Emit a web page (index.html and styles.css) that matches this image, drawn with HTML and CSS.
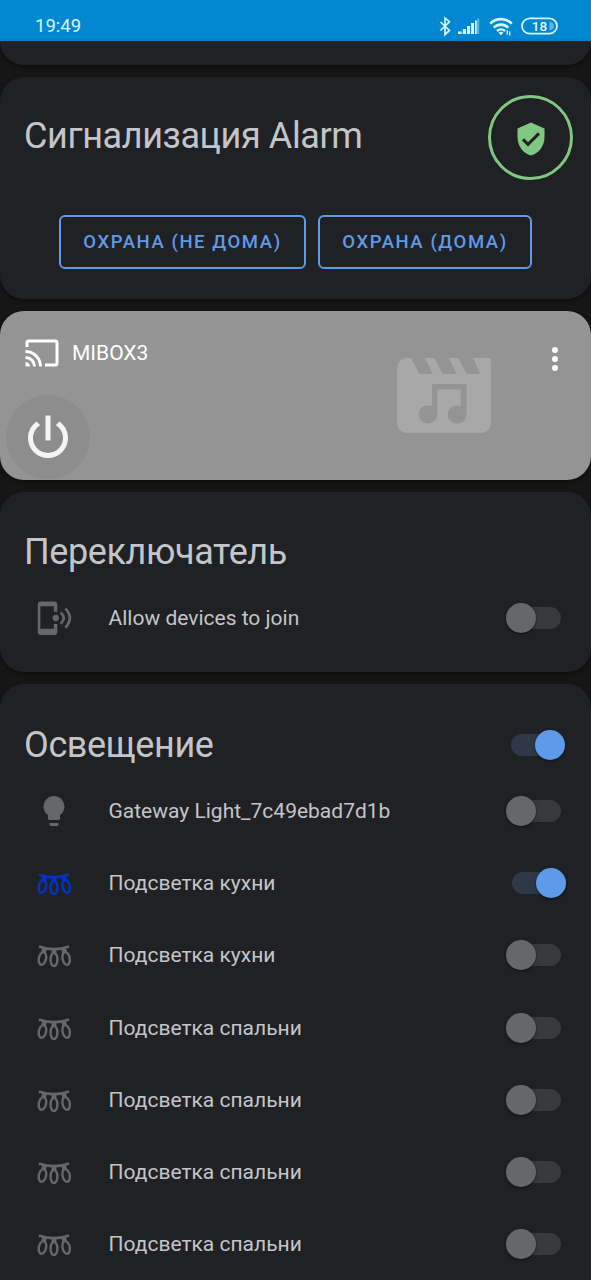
FILE: index.html
```html
<!DOCTYPE html>
<html lang="ru">
<head>
<meta charset="utf-8">
<title>Home</title>
<link rel="stylesheet" href="styles.css">
</head>
<body>
<svg class="defs" width="0" height="0">
  <symbol id="garland" viewBox="0 0 24 24">
    <g fill="none" stroke="currentColor">
      <path stroke-width="1.8" d="M2 6.300Q12 9.800 22 6.300"/>
      <path stroke-width="3.200" d="M5.600 7.600L5 10.800M12 8.400V11.200M18.400 7.600L19.200 10.800"/>
      <ellipse stroke-width="1.600" cx="4.300" cy="14.300" rx="2.400" ry="4.300" transform="rotate(12 4.300 14.300)"/>
      <ellipse stroke-width="1.600" cx="12" cy="15" rx="2.300" ry="4.300"/>
      <ellipse stroke-width="1.600" cx="20.100" cy="14.300" rx="2.400" ry="4.300" transform="rotate(-12 20.100 14.300)"/>
    </g>
  </symbol>
</svg>
<header class="status">
  <span class="clock">19:49</span>
  <svg class="status-icons" width="120" height="22" viewBox="0 0 120 22">
    <g fill="none" stroke="#d9f6ff" stroke-width="1.7">
      <path d="M1.500 6L10.500 14.500L6 18.500V2L10.500 5.700L1.500 14.500"/>
      <path d="M51.200 7.700A15 15 0 0 1 72.800 7.700" stroke-width="2.600"/>
      <path d="M54.700 11.600A10.400 10.400 0 0 1 69.300 11.600" stroke-width="2.600"/>
      <path d="M58 15A6 6 0 0 1 66 15" stroke-width="2.400"/>
      <rect x="83" y="2.300" width="35" height="15.400" rx="7.700"/>
    </g>
    <g fill="#d9f6ff">
      <path d="M19 15.500h3.700V18H19zM23.800 13h3.200v5H23.800zM28 10h3v8H28zM32 7h3v11H32zM36 4.500h1.800V18H36z"/>
      <path d="M59.500 16.700Q62 15 64.500 16.700L62 19.200z"/>
      <path d="M67.500 14.500h1.500v4h-1.500zM70 15.500h1.400v4h-1.400z"/>
    </g>
    <path fill="#5bb5e6" d="M38.200 2.500h2V18h-2zM110.500 5.500q4.500 1 4.500 4.500t-4.500 4.500z"/>
    <text class="battery" x="100.500" y="15">18</text>
  </svg>
</header>
<main class="cards">
  <section class="card card-cut"></section>

  <section class="card alarm">
    <div class="card-head">
      <h1 class="title title-alarm">Сигнализация Alarm</h1>
      <div class="badge">
        <svg class="icon" viewBox="0 0 24 24"><path fill="currentColor" d="M10,17L6,13L7.41,11.58L10,14.17L16.59,7.58L18,9M12,1L3,5V11C3,16.55 6.84,21.74 12,23C17.16,21.74 21,16.55 21,11V5L12,1Z"/></svg>
      </div>
    </div>
    <div class="actions">
      <button class="btn btn-away">ОХРАНА (НЕ ДОМА)</button>
      <button class="btn btn-home">ОХРАНА (ДОМА)</button>
    </div>
  </section>

  <section class="card media">
    <div class="media-main">
      <div class="media-name">
        <svg class="icon" viewBox="0 0 24 24"><path fill="currentColor" d="M1,10V12A9,9 0 0,1 10,21H12C12,14.92 7.07,10 1,10M1,14V16A5,5 0 0,1 6,21H8A7,7 0 0,0 1,14M1,18V21H4A3,3 0 0,0 1,18M21,3H3C1.89,3 1,3.89 1,5V8H3V5H21V19H14V21H21A2,2 0 0,0 23,19V5C23,3.89 22.1,3 21,3Z"/></svg>
        <span>MIBOX3</span>
      </div>
      <div class="power">
        <svg width="60" height="60" viewBox="0 0 24 24"><path fill="currentColor" d="M16.56,5.44L15.11,6.89C16.84,7.94 18,9.83 18,12A6,6 0 0,1 12,18A6,6 0 0,1 6,12C6,9.83 7.16,7.94 8.88,6.88L7.44,5.44C5.36,6.88 4,9.28 4,12A8,8 0 0,0 12,20A8,8 0 0,0 20,12C20,9.28 18.64,6.88 16.56,5.44M13,3H11V13H13"/></svg>
      </div>
    </div>
    <svg class="artwork" viewBox="2 4 20 16">
      <path fill="#a8a8a8" d="M4 4H22V18A2 2 0 0 1 20 20H4A2 2 0 0 1 2 18V6A2 2 0 0 1 4 4"/>
      <path fill="#949494" d="M5 4H7.900L9.600 7.430H6.700zM10 4H13L14.700 7.430H11.700zM15.100 4H18.200L19.700 7.430H16.800zM9.430 9.570H16.800V16A2 1.930 0 1 1 15.570 14.280V10.700H10.570V16A2 1.930 0 1 1 9.430 14.280z"/>
    </svg>
    <svg class="icon dots" viewBox="0 0 24 24"><path fill="currentColor" d="M12,16A2,2 0 0,1 14,18A2,2 0 0,1 12,20A2,2 0 0,1 10,18A2,2 0 0,1 12,16M12,10A2,2 0 0,1 14,12A2,2 0 0,1 12,14A2,2 0 0,1 10,12A2,2 0 0,1 12,10M12,4A2,2 0 0,1 14,6A2,2 0 0,1 12,8A2,2 0 0,1 10,6A2,2 0 0,1 12,4Z"/></svg>
  </section>

  <section class="card list switches">
    <div class="card-head"><h2 class="title title-switch">Переключатель</h2></div>
    <div class="row">
      <svg class="icon" viewBox="0 0 24 24">
        <path fill="currentColor" d="M3.200 1H12.200A2 2 0 0 1 14.200 3V7.800H11.900V4.200H2.900V19.200H11.900V16H14.200V21.300A2 2 0 0 1 12.200 23.300H3.200A2 2 0 0 1 1.200 21.300V3A2 2 0 0 1 3.200 1"/>
        <circle fill="currentColor" cx="13.200" cy="12" r="2.100"/>
        <path fill="none" stroke="currentColor" stroke-width="1.800" d="M16.500 8.300Q20.500 12 16.500 15.900M19.600 5.700Q25.500 12 19.600 18.500"/>
      </svg>
      <span class="name">Allow devices to join</span><i class="toggle"></i>
    </div>
  </section>

  <section class="card list lights">
    <div class="card-head"><h2 class="title title-light">Освещение</h2><i class="toggle on"></i></div>
    <div class="row">
      <svg class="icon" viewBox="0 0 24 24"><path fill="currentColor" d="M12,2A7,7 0 0,0 5,9C5,11.38 6.19,13.47 8,14.74V17A1,1 0 0,0 9,18H15A1,1 0 0,0 16,17V14.74C17.81,13.47 19,11.38 19,9A7,7 0 0,0 12,2M9,21A1,1 0 0,0 10,22H14A1,1 0 0,0 15,21V20H9V21Z"/></svg>
      <span class="name">Gateway Light_7c49ebad7d1b</span><i class="toggle"></i>
    </div>
    <div class="row"><svg class="icon lit"><use href="#garland"/></svg><span class="name">Подсветка кухни</span><i class="toggle on"></i></div>
    <div class="row"><svg class="icon"><use href="#garland"/></svg><span class="name">Подсветка кухни</span><i class="toggle"></i></div>
    <div class="row"><svg class="icon"><use href="#garland"/></svg><span class="name">Подсветка спальни</span><i class="toggle"></i></div>
    <div class="row"><svg class="icon"><use href="#garland"/></svg><span class="name">Подсветка спальни</span><i class="toggle"></i></div>
    <div class="row"><svg class="icon"><use href="#garland"/></svg><span class="name">Подсветка спальни</span><i class="toggle"></i></div>
    <div class="row"><svg class="icon"><use href="#garland"/></svg><span class="name">Подсветка спальни</span><i class="toggle"></i></div>
  </section>
</main>
</body>
</html>
```
FILE: styles.css
```css
* { box-sizing: border-box; }
body {
  margin: 0;
  height: 1280px;
  overflow: hidden;
  background: #161616;
  color: #c3c5c9;
  font-family: Roboto, sans-serif;
  font-size: 21px;
}
.defs { display: block; position: absolute; }
.status {
  display: flex;
  justify-content: space-between;
  height: 41px;
  padding: 16px 32px 0 35px;
  background: #0288d1;
  color: #d9f6ff;
}
.clock { font-size: 18.5px; line-height: 21px; }
.battery { fill: #e6faff; font-size: 13.5px; font-weight: 500; text-anchor: middle; }
.cards { display: flex; flex-direction: column; gap: 12px; }
.card {
  flex: none;
  border-radius: 24px;
  background: #202125;
  box-shadow: 0 2px 5px rgba(0, 0, 0, 0.45);
}
.card-cut { height: 24px; border-radius: 0 0 24px 24px; }
.card-head { display: flex; justify-content: space-between; align-items: center; }
.title {
  margin: 0;
  font-size: 36px;
  font-weight: 400;
  line-height: 48px;
  letter-spacing: -0.39px;
  white-space: nowrap;
}
.icon { display: block; flex: none; width: 36px; height: 36px; }

.alarm { height: 222px; padding: 18px 18px 0 24px; }
.alarm .card-head { height: 85px; }
.badge {
  display: flex;
  align-items: center;
  justify-content: center;
  width: 85px;
  height: 85px;
  border: 3px solid #81c784;
  border-radius: 50%;
  color: #81c784;
}
.badge .icon { margin-top: 2px; }
.title-alarm { margin-bottom: 3px; }
.actions { display: flex; gap: 12px; margin: 35px 0 0 35px; }
.btn {
  height: 54px;
  padding: 0;
  border: 2px solid #5f9be8;
  border-radius: 6px;
  background: none;
  color: #5f9be8;
  font: 500 18.5px Roboto, sans-serif;
  letter-spacing: 1.58px;
  white-space: nowrap;
}
.btn-away { width: 247px; }
.btn-home { width: 214px; }

.media {
  display: flex;
  height: 169px;
  padding: 0 18px 0 6px;
  background: #949494;
  color: #fff;
}
.media-main { flex: 1; padding-top: 24px; }
.media-name {
  display: flex;
  align-items: center;
  gap: 12px;
  height: 36px;
  padding-left: 18px;
}
.power {
  display: flex;
  align-items: center;
  justify-content: center;
  width: 84px;
  height: 84px;
  margin-top: 24px;
  padding-top: 1px;
  border-radius: 50%;
  background: #8d8d8d;
  color: #f4f4f4;
}
.artwork { width: 94px; height: 75px; margin: 47px 46px 0 0; }
.dots { margin-top: 30px; }

.list { padding: 23px 24px 0; }
.list .card-head { height: 73px; }
.switches { height: 180px; }
.lights { height: 640px; }
.lights .card-head { height: 75px; }
.row { display: flex; align-items: center; height: 72.2px; padding-left: 12px; }
.card-head + .row { margin-top: -6px; }
.lights .card-head + .row { margin-top: -7px; }
.row .icon { color: #65676b; }
.row .icon.lit { color: #0432c4; }
.name { flex: 1; padding-left: 36.5px; }
.toggle { position: relative; flex: none; width: 61.5px; height: 30px; }
.toggle::before {
  content: "";
  position: absolute;
  top: 4px;
  left: 1px;
  width: 54px;
  height: 22px;
  border-radius: 11px;
  background: #38393b;
}
.toggle::after {
  content: "";
  position: absolute;
  top: 0;
  left: 0;
  width: 30px;
  height: 30px;
  border-radius: 50%;
  background: #666769;
  box-shadow: 0 1px 3px rgba(0, 0, 0, 0.5);
}
.toggle.on::before { left: 6px; background: #2f3848; }
.toggle.on::after { left: 30px; background: #5f9aea; }
.card-head .toggle.on { margin-right: 1px; }
```
